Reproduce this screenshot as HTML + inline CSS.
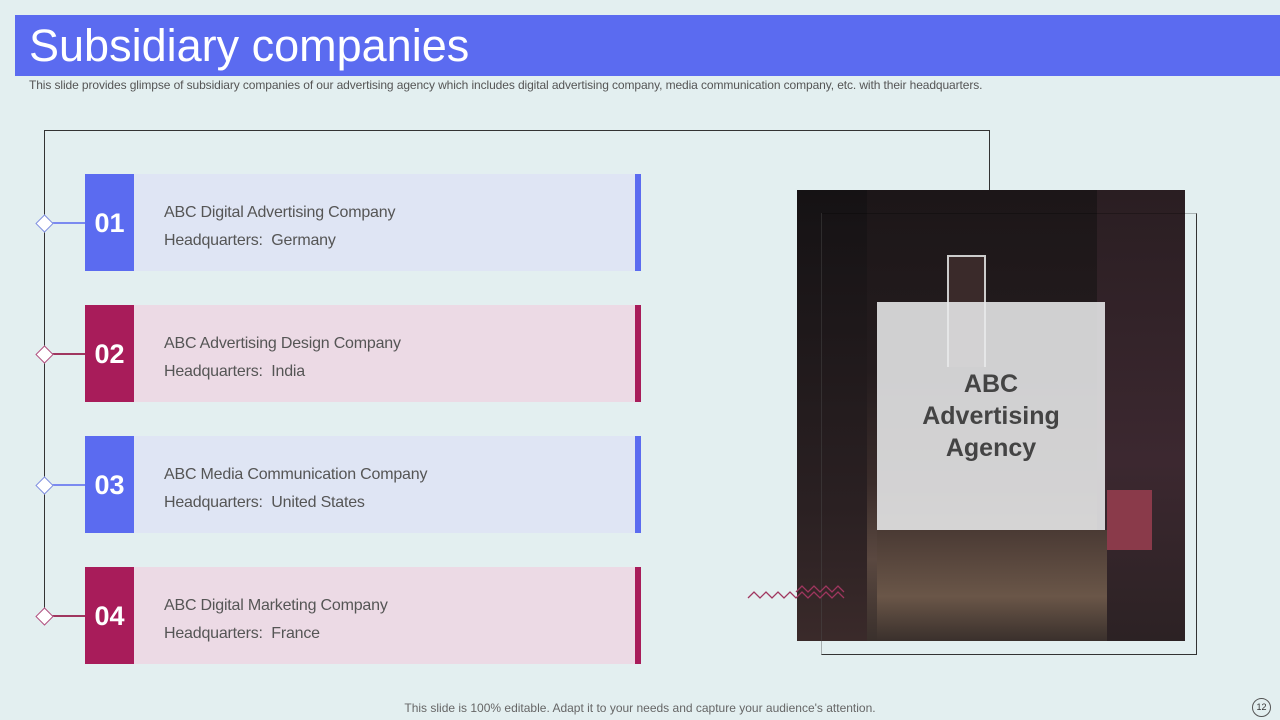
<!DOCTYPE html>
<html><head><meta charset="utf-8"><style>
body{margin:0;width:1280px;height:720px;background:#e3eff0;position:relative;overflow:hidden;font-family:"Liberation Sans",sans-serif}
.a{position:absolute}
.hdr{left:15px;top:15px;width:1265px;height:61px;background:#5b6bf0}
.ttl{left:29px;top:20px;font-size:45px;color:#fff}
.sub{left:29px;top:78px;font-size:12px;color:#555;letter-spacing:-0.1px}
.card{left:85px;width:556px;height:97px}
.num{left:0;top:0;width:49px;height:97px;color:#fff;font-weight:bold;font-size:27px;line-height:99px;text-align:center}
.bar{right:0;top:0;width:6px;height:97px}
.t{left:79px;font-size:16px;color:#555;letter-spacing:-0.2px}
.dia{width:11px;height:11px;background:#fff;border:1px solid #999;transform:rotate(45deg);left:38px}
.conn{left:50px;width:35px;height:2px}
</style></head><body>
<div class="a hdr"></div>
<div class="a ttl">Subsidiary companies</div>
<div class="a sub">This slide provides glimpse of subsidiary companies of our advertising agency which includes digital advertising company, media communication company, etc. with their headquarters.</div>
<div class="a" style="left:44px;top:130px;width:946px;height:1px;background:#333"></div>
<div class="a" style="left:989px;top:130px;width:1px;height:62px;background:#333"></div>
<div class="a" style="left:44px;top:130px;width:1px;height:487px;background:#333"></div>

<div class="a conn" style="top:222px;background:#7b8af0"></div>
<div class="a conn" style="top:353px;background:#a0365f"></div>
<div class="a conn" style="top:484px;background:#7b8af0"></div>
<div class="a conn" style="top:615px;background:#a0365f"></div>
<div class="a dia" style="top:217px;border-color:#8090e0"></div>
<div class="a dia" style="top:348px;border-color:#b05080"></div>
<div class="a dia" style="top:479px;border-color:#8090e0"></div>
<div class="a dia" style="top:610px;border-color:#b05080"></div>

<div class="a card" style="top:174px;background:#dfe5f4"><div class="a num" style="background:#5b6bf0">01</div><div class="a bar" style="background:#5b6bf0"></div><div class="a t" style="top:30px">ABC Digital Advertising Company</div><div class="a t" style="top:58px">Headquarters:&nbsp; Germany</div></div>
<div class="a card" style="top:305px;background:#ecdae5"><div class="a num" style="background:#a81c5a">02</div><div class="a bar" style="background:#a81c5a"></div><div class="a t" style="top:30px">ABC Advertising Design Company</div><div class="a t" style="top:58px">Headquarters:&nbsp; India</div></div>
<div class="a card" style="top:436px;background:#dfe5f4"><div class="a num" style="background:#5b6bf0">03</div><div class="a bar" style="background:#5b6bf0"></div><div class="a t" style="top:30px">ABC Media Communication Company</div><div class="a t" style="top:58px">Headquarters:&nbsp; United States</div></div>
<div class="a card" style="top:567px;background:#ecdae5"><div class="a num" style="background:#a81c5a">04</div><div class="a bar" style="background:#a81c5a"></div><div class="a t" style="top:30px">ABC Digital Marketing Company</div><div class="a t" style="top:58px">Headquarters:&nbsp; France</div></div>

<div class="a" style="left:797px;top:190px;width:388px;height:451px;background:linear-gradient(180deg,#1c1618 0%,#241c1e 40%,#3a2c2a 65%,#5a4840 82%,#3a302c 100%)">
 <div class="a" style="left:0;top:0;width:70px;height:451px;background:linear-gradient(180deg,#151214,#2a2022 70%,#3a2a2a)"></div>
 <div class="a" style="left:300px;top:0;width:88px;height:451px;background:linear-gradient(180deg,#2a1e22,#3c2830 60%,#2c2224)"></div>
 <div class="a" style="left:150px;top:65px;width:35px;height:110px;border:2px solid #ccc;border-bottom:none;background:#3a2a2a"></div>
 <div class="a" style="left:310px;top:300px;width:45px;height:60px;background:#8a3a4a"></div>
 <div class="a" style="left:80px;top:340px;width:230px;height:111px;background:linear-gradient(180deg,#4a3a34,#6a5648 60%,#3a302c)"></div>
</div>
<div class="a" style="left:821px;top:213px;width:376px;height:442px;border:1px solid #333;box-sizing:border-box;border-left-color:transparent;border-top-color:rgba(0,0,0,0.25)"></div>
<div class="a" style="left:821px;top:213px;width:1px;height:442px;background:rgba(80,80,80,0.4)"></div>
<div class="a" style="left:877px;top:302px;width:228px;height:228px;background:rgba(232,233,235,0.88)"></div>
<div class="a" style="left:877px;top:368px;width:228px;text-align:center;font-size:25px;font-weight:bold;color:#444;line-height:32px">ABC<br>Advertising<br>Agency</div>
<svg class="a" style="left:746px;top:580px" width="100" height="25"><polyline points="2,18 8,12 14,18 20,12 26,18 32,12 38,18 44,12 50,18 56,12 62,18 68,12 74,18 80,12 86,18 92,12 98,18" fill="none" stroke="#a0365f" stroke-width="1.3"/><polyline points="50,12 56,6 62,12 68,6 74,12 80,6 86,12 92,6 98,12" fill="none" stroke="#a0365f" stroke-width="1.3"/></svg>
<div class="a" style="left:0;width:1280px;top:701px;text-align:center;font-size:12px;color:#666">This slide is 100% editable. Adapt it to your needs and capture your audience's attention.</div>
<div class="a" style="left:1252px;top:698px;width:17px;height:17px;border:1px solid #555;border-radius:50%;font-size:9px;line-height:17px;text-align:center;color:#333">12</div>
</body></html>
